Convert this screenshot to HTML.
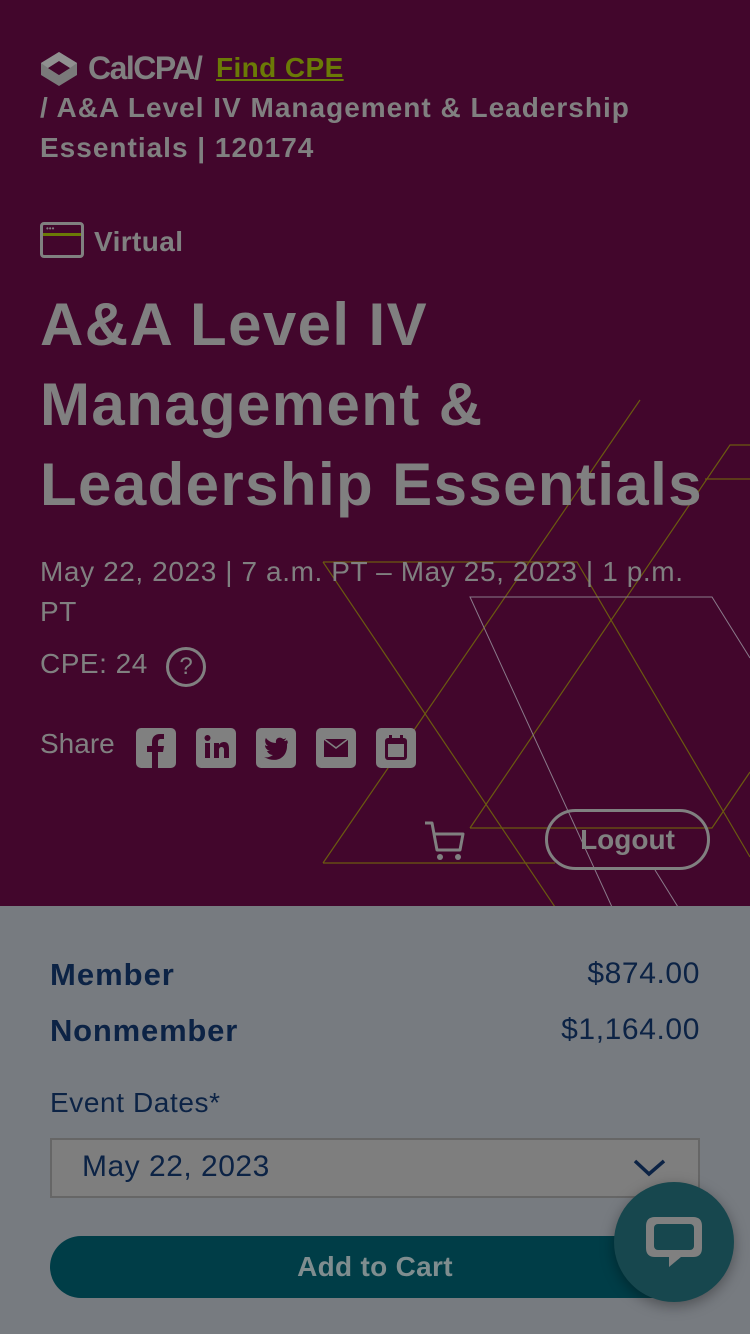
<!DOCTYPE html>
<html><head><meta charset="utf-8"><style>
*{margin:0;padding:0;box-sizing:border-box}
body{width:750px;height:1334px;overflow:hidden;font-family:"Liberation Sans",sans-serif;background:#777b80;position:relative}
.top{position:absolute;left:0;top:0;width:750px;height:906px;background:#42062c;overflow:hidden}
.g{color:#808080}
.abs{position:absolute;white-space:nowrap}
.bc{font-size:28px;font-weight:bold;line-height:40px;letter-spacing:1px}
.title{left:40px;top:285px;font-size:60px;font-weight:bold;line-height:80px;letter-spacing:1.4px}
.navy{color:#0c2345}
</style></head><body>
<div class="top">
<svg class="abs" style="left:0;top:0" width="750" height="906">
<g fill="none" stroke="#6b5a10" stroke-width="1.2">
<polyline points="323,863 555,863"/>
<line x1="323" y1="863" x2="640" y2="400"/>
<polyline points="470,828 730,445 750,445"/>
<polyline points="323,562 577,562 750,857"/>
<line x1="323" y1="562" x2="555" y2="907"/>
<polyline points="705,479 750,479"/>
<polyline points="470,828 712,828 750,772"/>
</g>
<g fill="none" stroke="#8a7a8a" stroke-width="1">
<polyline points="612,907 470,597 712,597 750,658"/>
<line x1="655" y1="870" x2="678" y2="907"/>
</g>
</svg>
<div class="abs" style="left:40px;top:51px"><svg width="38" height="36" viewBox="0 0 38 36"><path d="M19 1L37 12L30 17L19 10L8 17L19 24L30 17L37 12V24L19 35L1 24V12Z" fill="#7a7a7a"/><path d="M19 10L30 17L19 24L8 17Z" fill="#42062c"/><path d="M1 12L19 1L37 12L30 17L19 10L8 17Z" fill="#909090"/></svg></div>
<div class="abs g" style="left:88px;top:48px;font-size:32px;font-weight:bold;letter-spacing:-1.5px;line-height:40px">CalCPA/</div>
<div class="abs bc" style="left:216px;top:48px;color:#6b7a06;text-decoration:underline;letter-spacing:0.4px">Find CPE</div>
<div class="abs bc g" style="left:40px;top:88px">/ A&amp;A Level IV Management &amp; Leadership</div>
<div class="abs bc g" style="left:40px;top:128px">Essentials | 120174</div>
<div class="abs g" style="left:40px;top:222px;width:44px;height:36px;border:3px solid #808080;border-radius:4px"><div style="position:absolute;left:0;right:0;top:8px;border-top:3px solid #6b7a06"></div><div style="position:absolute;left:3px;top:1px;font-size:8px;line-height:6px">•••</div></div>
<div class="abs g" style="left:94px;top:226px;font-size:28px;font-weight:bold;letter-spacing:0.4px">Virtual</div>
<div class="abs title g">A&amp;A Level IV<br>Management &amp;<br>Leadership Essentials</div>
<div class="abs g" style="left:40px;top:552px;font-size:28px;line-height:40px;letter-spacing:0.6px">May 22, 2023 | 7 a.m. PT – May 25, 2023 | 1 p.m.<br>PT</div>
<div class="abs g" style="left:40px;top:648px;font-size:28px;letter-spacing:0.5px">CPE: 24</div>
<div class="abs" style="left:166px;top:647px;width:40px;height:40px;border:3px solid #808080;border-radius:50%;color:#808080;font-size:24px;text-align:center;line-height:34px">?</div>
<div class="abs g" style="left:40px;top:728px;font-size:28px">Share</div>
<svg class="abs" style="left:136px;top:728px" width="282" height="40" viewBox="0 0 282 40">
<g fill="#808080"><rect x="0" y="0" width="40" height="40" rx="5"/><rect x="60" y="0" width="40" height="40" rx="5"/><rect x="120" y="0" width="40" height="40" rx="5"/><rect x="180" y="0" width="40" height="40" rx="5"/><rect x="240" y="0" width="40" height="40" rx="5"/></g>
<path d="M22 40V24H27L28 18H22V14C22 12 23 11 25 11H28V6H24C19 6 16 9 16 14V18H11V24H16V40Z" fill="#42062c"/>
<g fill="#42062c"><rect x="69" y="15" width="5" height="15"/><circle cx="71.5" cy="10" r="3"/><path d="M78 15H83V17C84 15 86 14 88 14C92 14 93 17 93 21V30H88V22C88 20 87 19 85.5 19C84 19 83 20 83 22V30H78Z"/></g>
<path d="M151 12C150 13 149 13 148 13C149 12 150 11 150 10C149 11 148 11 147 11C144 8 139 10 140 15C136 15 132 13 130 10C128 13 130 17 132 18C131 18 130 18 129 17C129 20 131 22 134 23C133 23 132 23 131 23C132 25 134 27 137 27C134 29 131 30 128 29C140 36 152 30 151 16C152 15 152 14 151 12Z" fill="#42062c"/>
<rect x="188" y="11" width="24" height="18" fill="#42062c"/><path d="M188 11L200 20L212 11" fill="none" stroke="#808080" stroke-width="1.5"/>
<rect x="249" y="10" width="22" height="22" rx="3" fill="#42062c"/><rect x="252" y="16" width="16" height="13" fill="#808080"/><rect x="253" y="7" width="3" height="6" fill="#42062c"/><rect x="264" y="7" width="3" height="6" fill="#42062c"/>
</svg>
<svg class="abs" style="left:423px;top:820px" width="42" height="42" viewBox="0 0 42 42"><path d="M2 3H9L14 30H37L40 14H12" fill="none" stroke="#808080" stroke-width="3" stroke-linejoin="round"/><circle cx="17" cy="37" r="3" fill="#808080"/><circle cx="35" cy="37" r="3" fill="#808080"/></svg>
<div class="abs" style="left:545px;top:809px;width:165px;height:61px;border:3px solid #808080;border-radius:31px;color:#808080;font-size:28px;font-weight:bold;text-align:center;line-height:55px">Logout</div>
</div>
<div class="abs navy" style="left:50px;top:957px;font-size:31px;font-weight:bold;letter-spacing:1px">Member</div>
<div class="abs navy" style="right:50px;top:957px;font-size:30px;letter-spacing:0.6px">$874.00</div>
<div class="abs navy" style="left:50px;top:1013px;font-size:31px;font-weight:bold;letter-spacing:0.8px">Nonmember</div>
<div class="abs navy" style="right:50px;top:1013px;font-size:30px;letter-spacing:0.6px">$1,164.00</div>
<div class="abs navy" style="left:50px;top:1087px;font-size:28px;letter-spacing:0.6px">Event Dates*</div>
<div class="abs" style="left:50px;top:1138px;width:650px;height:60px;border:2px solid #666;background:#7e7e7e"></div>
<div class="abs navy" style="left:82px;top:1150px;font-size:30px;letter-spacing:0.5px">May 22, 2023</div>
<svg class="abs" style="left:632px;top:1157px" width="36" height="22"><path d="M3 4L17 17L32 4" fill="none" stroke="#0c2345" stroke-width="3.5"/></svg>
<div class="abs" style="left:50px;top:1236px;width:650px;height:62px;border-radius:31px;background:#003d47;color:#7f8d8f;font-size:28px;font-weight:bold;text-align:center;line-height:62px;letter-spacing:0.3px">Add to Cart</div>
<div class="abs" style="left:614px;top:1182px;width:120px;height:120px;border-radius:50%;background:#17474e;box-shadow:0 4px 14px rgba(0,0,0,.35)"></div>
<svg class="abs" style="left:645px;top:1215px" width="60" height="58" viewBox="0 0 60 58"><path d="M10 2H48C54 2 57 5 57 11V33C57 39 54 42 48 42H36L24 52V42H10C4 42 1 39 1 33V11C1 5 4 2 10 2Z" fill="#808080"/><rect x="9" y="9" width="40" height="26" rx="4" fill="#17474e"/></svg>
</body></html>
